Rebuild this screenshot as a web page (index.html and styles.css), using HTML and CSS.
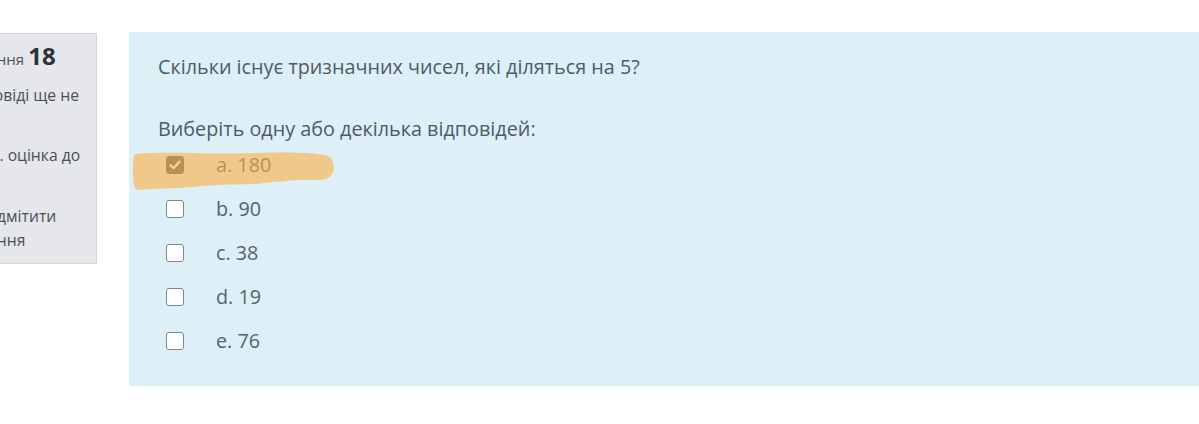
FILE: index.html
```html
<!DOCTYPE html>
<html lang="uk">
<head>
<meta charset="utf-8">
<link rel="stylesheet" href="styles.css">
</head>
<body>
<div class="page">
  <aside class="info">
    <div class="qno"><span class="qlabel">Питання</span> <span class="qnum">18</span></div>
    <div class="state"><span class="line">Відповіді ще не</span><span class="line">дано</span></div>
    <div class="grade"><span class="line">Макс. оцінка до</span><span class="line">1,00</span></div>
    <div class="flag"><span class="line"><svg class="flagicon" viewBox="0 0 16 16" width="14" height="14"><path d="M3 1 V15 M3 2 H12 L10 5.5 L12 9 H3" fill="none" stroke="#4a5058" stroke-width="1.5"/></svg>Відмітити</span><span class="line">питання</span></div>
  </aside>
  <section class="content">
    <div class="qtext">Скільки існує тризначних чисел, які діляться на 5?</div>
    <div class="prompt">Виберіть одну або декілька відповідей:</div>
    <div class="answers">
      <div class="opt"><span class="box checked"><svg viewBox="0 0 18 18" width="18" height="18"><path d="M4.5 9.2 L7.6 12.2 L13.5 5.6" fill="none" stroke="#ffffff" stroke-width="2.4" stroke-linecap="round" stroke-linejoin="round"/></svg></span><span class="lbl">a. 180</span></div>
      <div class="opt"><span class="box"></span><span class="lbl">b. 90</span></div>
      <div class="opt"><span class="box"></span><span class="lbl">c. 38</span></div>
      <div class="opt"><span class="box"></span><span class="lbl">d. 19</span></div>
      <div class="opt"><span class="box"></span><span class="lbl">e. 76</span></div>
      <svg class="marker" viewBox="0 0 202 40" width="202" height="40"><path d="M3 3 C40 0 80 4 120 2 C150 1 175 1 192 4 C200 6 202 14 200 21 C198 27 192 30 180 29 C160 28 140 32 120 33 C100 34 80 33 60 36 C40 38 20 37 6 39 C1 39 0 32 0 21 C0 10 0 4 3 3 Z" fill="#fcaf41"/></svg>
    </div>
  </section>
</div>
</body>
</html>
```

FILE: styles.css
```css
html, body {
  margin: 0;
  padding: 0;
  background: #ffffff;
  overflow: hidden;
}

body {
  font-family: "Open Sans", "Liberation Sans", sans-serif;
  color: #4f5b65;
}

.page {
  display: flex;
  align-items: flex-start;
  gap: 32px;
  padding-top: 32px;
  width: 1199px;
  height: 424px;
  box-sizing: border-box;
}

.info {
  flex: 0 0 auto;
  width: 145px;
  margin-left: -48px;
  margin-top: 1px;
  box-sizing: border-box;
  padding: 6px 8px 11px 8px;
  background: #e5e7ea;
  border: 1px solid #d3d6da;
  color: #4a5058;
  font-size: 15.7px;
}

.line {
  display: flex;
  align-items: center;
  white-space: nowrap;
}

.flagicon {
  flex: 0 0 auto;
  margin-right: 8px;
}

.qno {
  line-height: 32px;
  white-space: nowrap;
}

.qlabel {
  font-size: 15px;
}

.qnum {
  font-size: 24px;
  font-weight: 700;
  color: #2c3238;
}

.state {
  margin-top: 8px;
  line-height: 24px;
}

.grade {
  margin-top: 12px;
  line-height: 24px;
}

.flag {
  margin-top: 13px;
  line-height: 24px;
}

.content {
  flex: 1 1 auto;
  height: 354px;
  box-sizing: border-box;
  padding: 20px 29px;
  background: #def0f7;
  font-size: 19.8px;
}

.qtext {
  line-height: 30px;
}

.prompt {
  margin-top: 32px;
  line-height: 30px;
}

.answers {
  position: relative;
  margin-top: -1px;
}

.opt {
  display: flex;
  align-items: center;
  height: 44px;
  padding-left: 8px;
  gap: 32px;
}

.box {
  width: 18px;
  height: 18px;
  box-sizing: border-box;
  border: 1.5px solid #7f878d;
  border-radius: 3px;
  background: #ffffff;
  display: flex;
  align-items: center;
  justify-content: center;
}

.box.checked {
  background: #4d6572;
  border-color: #4d6572;
}

.box.checked svg {
  margin: -1.5px;
}

.lbl {
  line-height: 30px;
  color: #56626b;
}

.marker {
  position: absolute;
  left: -25px;
  top: 8px;
  opacity: 0.6;
  pointer-events: none;
}
```
